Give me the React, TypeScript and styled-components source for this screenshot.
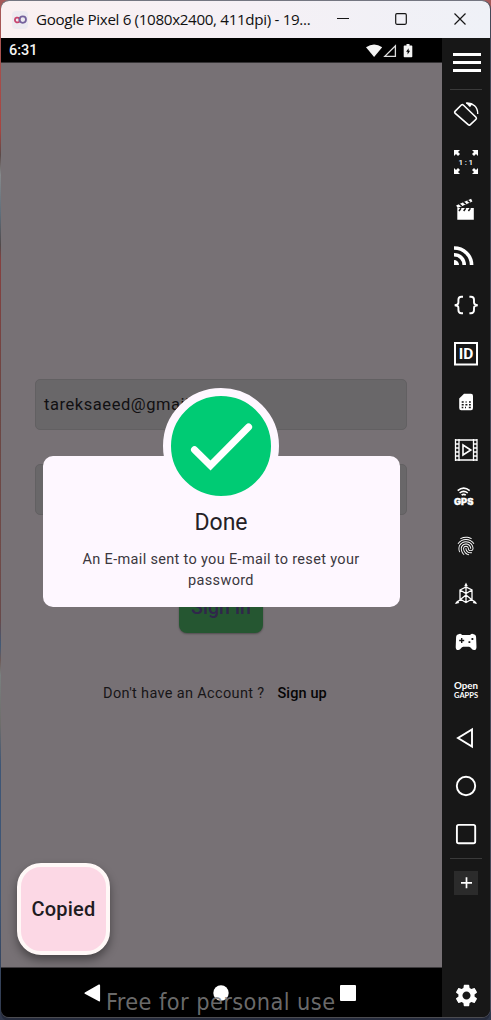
import React from "react";
import styled, { createGlobalStyle } from "styled-components";
import { MdFingerprint, MdSettings } from "react-icons/md";

const GlobalStyle = createGlobalStyle`
  * { box-sizing: border-box; }
  body { margin: 0; background: #41424e; }
`;

const Desktop = styled.div`
  width: 491px;
  height: 1020px;
  padding: 1px 1px 3px;
  background: linear-gradient(to bottom, #a65a5a 0, #a8443f 130px, #5b4a49 155px, #85898b 175px, #5d6d7a 215px,
    #514a4b 245px, #87403f 260px, #6b4643 400px, #704a48 560px, #68494a 620px, #405a78 645px, #6e5a58 660px,
    #79807f 675px, #6e6d6b 725px, #3e5676 765px, #3e5676 900px, #30384c 100%);
`;
const Window = styled.div`
  width: 489px;
  height: 1016px;
  border-radius: 8px;
  overflow: hidden;
  display: flex;
  flex-direction: column;
  background: #171717;
  position: relative;
  box-shadow: 1px 0 0 #454858, 0 -1px 0 #747681, 0 1px 0 #4c4c51, 0 4px 0 #252b3c;
`;
const TitleBar = styled.header`
  height: 37px;
  flex: none;
  display: flex;
  align-items: center;
  padding-left: 11px;
  background: linear-gradient(to right, #faf0f1, #f5f0f5 50%, #eff1f7);
  font: 15.2px "Open Sans", "Noto Sans", sans-serif;
  color: #111;
`;
const Title = styled.span`
  width: 281px;
  margin-left: 8px;
  padding-bottom: 1px;
  white-space: nowrap;
  letter-spacing: -0.34px;
`;
const Controls = styled.div`
  display: flex;
  align-items: center;
  gap: 46.5px;
  margin-left: 19.5px;
  padding-bottom: 1px;
`;
const Main = styled.div`
  display: flex;
  flex: 1;
  min-height: 0;
`;
const Phone = styled.section`
  width: 441px;
  display: flex;
  flex-direction: column;
  font-family: Roboto, sans-serif;
`;
const StatusBar = styled.div`
  height: 25px;
  flex: none;
  display: flex;
  justify-content: space-between;
  align-items: center;
  padding: 1px 28px 0 8px;
  background: #000;
  border-bottom: 1px solid #343234;
  color: #f4f4f4;
  font-size: 14.5px;
  font-weight: 500;
`;
const Screen = styled.div`
  height: 904px;
  flex: none;
  position: relative;
  background: #777175;
  display: flex;
  flex-direction: column;
  align-items: center;
  padding: 316px 1px 0 0;
`;
const Field = styled.div`
  width: 372px;
  height: 51px;
  flex: none;
  margin-bottom: 34px;
  border: 1px solid #626062;
  border-radius: 5px;
  background: #696769;
  padding-left: 8px;
  line-height: 49px;
  font-size: 16.5px;
  letter-spacing: 0.56px;
  color: #111012;
`;
const SignIn = styled.button`
  width: 84px;
  height: 52px;
  margin-top: 32px;
  border: 0;
  padding: 0;
  border-radius: 8px;
  background: #255631;
  box-shadow: 0 1px 2px #0005;
  color: #30264b;
  font: 500 19.5px Roboto, sans-serif;
  letter-spacing: 0.1px;
`;
const Register = styled.div`
  display: flex;
  gap: 13px;
  margin-top: 52px;
  margin-right: 12px;
  font-size: 14.5px;
  line-height: 18px;
  letter-spacing: 0.34px;
  color: #171618;
  white-space: nowrap;
`;
const SignUp = styled.b`
  font-weight: 500;
  letter-spacing: 0.12px;
  color: #050505;
`;
const Dialog = styled.div`
  position: absolute;
  left: 41.5px;
  top: 393px;
  width: 357px;
  height: 151px;
  border-radius: 10px;
  background: #fef7ff;
  padding-top: 51px;
  text-align: center;
  color: #242126;
`;
const Badge = styled.div`
  position: absolute;
  left: 120.5px;
  top: -68.5px;
  width: 116px;
  height: 116px;
  border-radius: 50%;
  border: 8px solid #fef7ff;
  background: #00cb74;
`;
const Heading = styled.h1`
  margin: 0 0 10px;
  font-size: 23px;
  font-weight: 400;
  line-height: 32px;
`;
const Message = styled.p`
  margin: 0 30px;
  font-size: 14.5px;
  line-height: 21px;
  letter-spacing: 0.33px;
  color: #3b373e;
`;
const Toast = styled.div`
  position: absolute;
  left: 16px;
  top: 799.5px;
  width: 93px;
  height: 92px;
  border: 4px solid #fff8f7;
  border-radius: 24px;
  background: #fcd8e5;
  box-shadow: 0 5px 10px #0006;
  display: flex;
  align-items: center;
  justify-content: center;
  color: #201b1f;
  font-size: 20px;
  font-weight: 500;
  letter-spacing: 0.2px;
`;
const NavBar = styled.nav`
  flex: 1;
  position: relative;
  background: #000;
  border-top: 1px solid #3d3a3d;
  padding-left: 83px;
`;
const Watermark = styled.div`
  position: absolute;
  left: 105px;
  top: 19px;
  font: 23.3px/30px "DejaVu Sans Condensed", "DejaVu Sans", sans-serif;
  font-stretch: condensed;
  letter-spacing: 0.42px;
  white-space: nowrap;
  color: #7d7d7ddd;
`;
const Sidebar = styled.aside`
  width: 48px;
  background: #171717;
  color: #fff;
  display: flex;
  flex-direction: column;
  align-items: center;
`;
const Slot = styled.div<{ $height?: number }>`
  width: 48px;
  height: ${(p) => p.$height ?? 48}px;
  flex: none;
  display: flex;
  align-items: center;
  justify-content: center;
`;
const MenuSlot = styled(Slot)`
  padding: 0 0 2px 2px;
`;
const Divider = styled.div`
  width: 32px;
  height: 1px;
  flex: none;
  background: #3a3a3a;
`;
const PlusBox = styled.div`
  width: 24px;
  height: 24px;
  background: #2b2b2b;
  display: flex;
  align-items: center;
  justify-content: center;
`;
const Settings = styled.div`
  margin-top: 75px;
  height: 28px;
`;
const GpsLabel = styled.text`
  font: 900 8.4px Inter, Roboto, sans-serif;
`;
const GappsLabel = styled.text<{ $size: number; $weight: number }>`
  font: ${(p) => p.$weight} ${(p) => p.$size}px Lato, sans-serif;
`;

const Glyph = ({ children }: { children: React.ReactNode }) => (
  <Slot>
    <svg width="48" height="48" viewBox="0 0 48 48" fill="none" stroke="#fff" strokeWidth="1.6">
      {children}
    </svg>
  </Slot>
);

const tools: React.ReactNode[] = [
  <>
    <path d="M13 21.4 19.3 15Q20.3 14.2 21.3 15L34 27.3Q34.8 28.3 34 29.3L28.1 34.8Q27.2 35.6 26.2 34.7L13 23.2Q12.2 22.2 13 21.4Z" />
    <path d="M24 13.1C31 12.4 36 17.5 35.7 24" strokeWidth="1.4" />
    <path d="M23.6 12.8 30.4 13.8 28 17.2z" fill="#fff" stroke="none" />
  </>,
  <g fill="#fff" stroke="none">
    <path d="M12 12h6l-2 2 2 2-2 2-2-2-2 2zM36 12h-6l2 2-2 2 2 2 2-2 2 2zM12 36h6l-2-2 2-2-2-2-2 2-2-2zM36 36h-6l2-2-2-2 2-2 2 2 2-2z" />
    <text x="24.6" y="27" textAnchor="middle" fontFamily="Roboto" fontSize="8" fontWeight="500" letterSpacing="1.7">1:1</text>
  </g>,
  <g fill="#fff" stroke="none">
    <path d="m14.1 19.4 15-6.6 1.3 2.8-14.7 6.5z" />
    <path d="M15.3 22h16.5v11.7H15.3z" />
    <path d="m17.2 18 2.5 2M21.4 16.2l2.5 2M25.5 14.4l2.5 2M17 25l2-2.8M21.7 25l2-2.8M26.4 25l2-2.8" stroke="#171717" strokeWidth="1.5" />
  </g>,
  <>
    <path d="M12 26a5 5 0 0 1 5 5h-5z" fill="#fff" stroke="none" />
    <path d="M12 20.8c6 0 10.2 4.2 10.2 10.2M12 14c9.8 0 17.6 7.6 17.6 17" strokeWidth="3.6" />
  </>,
  <path d="M21 14.8h-1.6q-3 0-3 3v2.8q0 2.6-3.8 2.6 3.8 0 3.8 2.8V28q0 3.2 3 3.2H21M27.4 14.8h1.6q3 0 3 3v2.8q0 2.6 3.8 2.6-3.8 0-3.8 2.8V28q0 3.2-3 3.2h-1.6" strokeWidth="1.9" />,
  <>
    <path d="M13 13h22v21.5H13z" strokeWidth="2" />
    <text x="24" y="29.4" textAnchor="middle" fontFamily="Roboto" fontSize="15.5" fontWeight="700" fill="#fff" stroke="none">ID</text>
  </>,
  <>
    <path d="M17.2 20.5 22 15.8h7q2 0 2 2V30q0 2.2-2 2.2h-9.8q-2 0-2-2.2z" fill="#fff" stroke="none" />
    <path d="M19.7 24h2M23.6 24h1M27 24h1.8M19.7 26.8h2M23.4 26.8h2M27 26.8h1.8M19.7 29.5h1.6M23 29.5h1M26.8 29.5h2" stroke="#171717" strokeWidth="1.6" />
  </>,
  <>
    <path d="M13.5 13v22M17 13v22M31.5 13v22M35 13v22M17 14h14.5M17 34h14.5M13.5 14H17M13.5 18H17M13.5 22H17M13.5 26H17M13.5 30H17M13.5 34H17M31.5 14H35M31.5 18H35M31.5 22H35M31.5 26H35M31.5 30H35M31.5 34H35" strokeWidth="1.3" />
    <path d="m21 19 7.8 5-7.8 5z" />
  </>,
  <>
    <path d="M15.7 16.7q6-5.2 12 0M17.6 19q4.1-3.4 8.2 0M19.6 21.2q2.1-1.6 4.2 0" strokeWidth="1.6" />
    <GpsLabel x="12" y="31.2" fill="#fff" stroke="#fff" strokeWidth=".3" textLength="19.4" lengthAdjust="spacingAndGlyphs">GPS</GpsLabel>
  </>,
  <g transform="translate(13 13)"><MdFingerprint size={22} color="#fff" stroke="none" /></g>,
  <>
    <path d="M24 15v10M24 25 14 33M24 25 34 33M18 20l6-3 6 3v9l-6 3.5-6-3.5zl6 3.5 6-3.5M24 23.5v9" strokeWidth="1.3" />
    <path d="m22.2 16.2 1.8-3.6 1.8 3.6zM15.5 30.5l1.8 2.6-4.5.8zM32.5 30.5l-1.8 2.6 4.5.8z" fill="#fff" stroke="none" />
  </>,
  <>
    <path d="M17.2 16q1.4-.5 2.4.5.5.5 1.2.5h6.6q.7 0 1.2-.5 1-1 2.4-.5 3 .6 3.1 3.2l.4 10q-.2 3-2.6 2.9-1.7 0-2.7-1.8-.8-1.5-2.2-1.5h-5.8q-1.4 0-2.2 1.5-1 1.8-2.7 1.8-2.4.1-2.6-2.9l.4-10q.1-2.6 3.1-3.2z" fill="#fff" stroke="none" />
    <path d="M17.2 22.5h5M19.7 20v5" stroke="#171717" strokeWidth="1.4" />
    <path d="M26.5 24.2h1.8M29.5 21h1.8" stroke="#171717" strokeWidth="1.8" />
  </>,
  <g fill="#fff" stroke="none">
    <GappsLabel $size={10} $weight={700} x="12" y="22.6" textLength="24" lengthAdjust="spacingAndGlyphs">Open</GappsLabel>
    <GappsLabel $size={7.6} $weight={700} x="12" y="31.6" textLength="24" lengthAdjust="spacingAndGlyphs">GAPPS</GappsLabel>
  </g>,
  <path d="M30 15.5v17L16 24z" strokeWidth="1.9" />,
  <circle cx="24" cy="24" r="9.2" strokeWidth="1.9" />,
  <rect x="14.9" y="14.9" width="18.3" height="18.3" rx="1.8" strokeWidth="1.9" />,
];

export default function App() {
  return (
    <Desktop>
      <GlobalStyle />
      <Window>
        <TitleBar>
          <svg width="16" height="18" viewBox="0 0 16 18" fill="none" strokeWidth="1.8">
            <rect width="16" height="18" rx="4" fill="#edeaf0" />
            <path d="M7.3 7.4C5.8 5.9 2.9 6.4 2.9 8.9s3 3.3 4.5 1.7V7" stroke="#c8436d" />
            <circle cx="10.8" cy="8.6" r="3.2" stroke="#74619c" />
          </svg>
          <Title>Google Pixel 6 (1080x2400, 411dpi) - 19...</Title>
          <Controls>
            <svg width="12" height="12" stroke="#161616"><path d="M0 5.5h12" /></svg>
            <svg width="12" height="12" fill="none" stroke="#161616" strokeWidth="1.2"><rect x=".7" y=".7" width="10.6" height="10.6" rx="1.2" /></svg>
            <svg width="12" height="12" stroke="#161616" strokeWidth="1.2"><path d="m.5.5 11 11m0-11-11 11" /></svg>
          </Controls>
        </TitleBar>
        <Main>
          <Phone>
            <StatusBar>
              <span>6:31</span>
              <svg width="48" height="16" viewBox="0 0 48 16" fill="#f4f4f4">
                <path d="M0 4.2q8.2-5.6 16.2 0L8.1 14z" />
                <path d="M29.4 2.7v10.6H18.8z" fill="none" stroke="#ddd" strokeWidth="1.3" />
                <path d="M38.4 2.4h2.1V1h3v1.4h2.1q.7 0 .7.8v10.2q0 .8-.8.8h-7q-.8 0-.8-.8V3.2q0-.8.8-.8z" />
                <path d="m42.6 5.2-2.5 3.6h1.5v2.6l2.5-3.6h-1.5z" fill="#000" />
              </svg>
            </StatusBar>
            <Screen>
              <Field>tareksaeed@gmail.com</Field>
              <Field />
              <SignIn>Sign in</SignIn>
              <Register><span>Don't have an Account ?</span><SignUp>Sign up</SignUp></Register>
              <Dialog>
                <Badge>
                  <svg width="100" height="100" viewBox="0 0 100 100" fill="none" stroke="#fff" strokeWidth="7" strokeLinecap="round">
                    <path d="m23.5 53.7 16 15.8L77.6 31" />
                  </svg>
                </Badge>
                <Heading>Done</Heading>
                <Message>An E-mail sent to you E-mail to reset your password</Message>
              </Dialog>
              <Toast>Copied</Toast>
            </Screen>
            <NavBar>
              <svg width="280" height="48" fill="#fff">
                <path d="M.8 24.4 14.8 16.5q1.3-.5 1.3 1v15q0 1.4-1.3.8L.8 25.7q-.8-.6 0-1.3z" />
                <circle cx="137" cy="25" r="7.7" />
                <rect x="256" y="17" width="16" height="16" rx="1" />
              </svg>
              <Watermark>Free for personal use</Watermark>
            </NavBar>
          </Phone>
          <Sidebar>
            <MenuSlot $height={51}>
              <svg width="28" height="20" stroke="#fff" strokeWidth="3"><path d="M0 1.5h28M0 9.5h28M0 17.5h28" /></svg>
            </MenuSlot>
            <Divider />
            {tools.map((icon, i) => <Glyph key={i}>{icon}</Glyph>)}
            <Divider />
            <Slot>
              <PlusBox><svg width="12" height="12" stroke="#fff" strokeWidth="1.7"><path d="M1 5.8h11M6.5.3v11" /></svg></PlusBox>
            </Slot>
            <Settings><MdSettings size={27} /></Settings>
          </Sidebar>
        </Main>
      </Window>
    </Desktop>
  );
}
